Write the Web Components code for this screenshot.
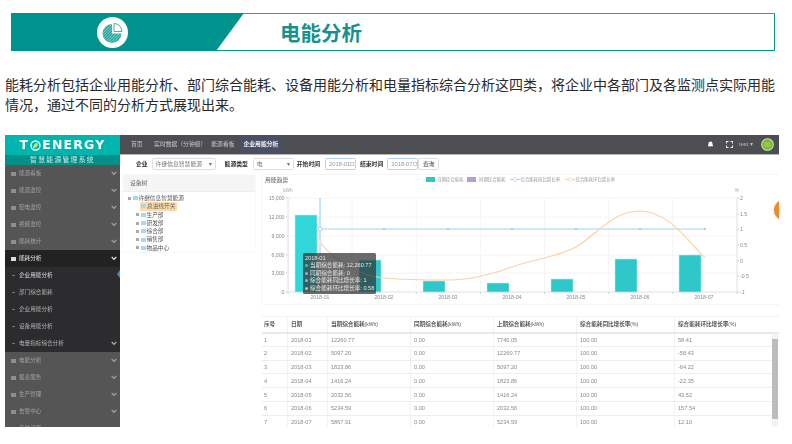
<!DOCTYPE html>
<html lang="zh"><head><meta charset="utf-8"><title>电能分析</title>
<style>
html,body{margin:0;background:#fff;width:792px;height:444px;overflow:hidden;font-family:"Liberation Sans","Noto Sans CJK SC",sans-serif}
</style></head><body>
<page-banner>电能分析</page-banner>
<intro-text>能耗分析包括企业用能分析、部门综合能耗、设备用能分析和电量指标综合分析这四类，将企业中各部门及各监测点实际用能情况，通过不同的分析方式展现出来。</intro-text>
<energy-app></energy-app>
<script>
const FONT='"Liberation Sans","Noto Sans CJK SC",sans-serif';
class Base extends HTMLElement{
  constructor(){super();this.attachShadow({mode:'open'}).innerHTML=this.constructor.html;}
}
customElements.define('page-banner',class extends Base{static html=`<style>
:host{display:flex;box-sizing:border-box;height:38px;margin:13px 17px 0 11px;border:1px solid #0b9490;border-left:0;border-top-color:#2b9f9b;background:#fff;font-family:"Noto Sans CJK SC",sans-serif}
.l{flex:0 0 233px;margin:-1px 0;background:#00938e;clip-path:polygon(0 0,100% 0,88% 100%,0 100%);display:flex;align-items:center;padding-left:86px;box-sizing:border-box}
.t{margin-left:36px;font-size:20.5px;line-height:36px;font-weight:700;color:#17918b;white-space:nowrap}
svg{display:block}
</style><div class="l"><svg width="31" height="31" viewBox="0 0 31 31"><defs><pattern id="h" width="2" height="2" patternUnits="userSpaceOnUse" patternTransform="rotate(45)"><rect width="2" height="2" fill="#7fc9c5"/><rect width="1" height="2" fill="#159c97"/></pattern></defs><circle cx="15.5" cy="15.5" r="15.5" fill="#fff"/><path d="M15 7A9.5 9.5 0 1 0 24.5 16.5H15Z" fill="url(#h)"/><path d="M17 6.500A8 8 0 0 1 25 14.500H17Z" fill="#fff" stroke="#159c97" stroke-width=".8"/></svg></div><div class="t"><slot></slot></div>`});
customElements.define('intro-text',class extends Base{static html=`<style>
:host{display:block;width:771px;margin:23px 0 0 5px;font:14px/20px "Noto Sans CJK SC",sans-serif;color:#2a2a2a}
</style><slot></slot>`});

customElements.define('side-menu',class extends Base{
static html=`<style>
:host{display:block;width:115px;background:#555;color:#a2a2a2;font:5.6px/17px ${FONT};overflow:hidden}
.logo{height:20px;background:#00b5ad;color:#fff;display:flex;align-items:center;justify-content:center;font:700 12.5px/20px "DejaVu Sans",sans-serif;letter-spacing:1.2px}
.logo svg{margin:0 1px}
.sub{height:10px;background:#029088;color:#cfe9e4;text-align:center;font-size:6.8px;line-height:10px;letter-spacing:1.3px}
.r{height:17px;display:flex;align-items:center;padding-left:6px;box-sizing:border-box;position:relative}
.r i{width:5px;height:4px;background:#8f8f8f;margin-right:3px;flex:none}
.r b{font-weight:400;white-space:nowrap}
.c{position:absolute;right:3px;top:6px}
.on{background:#222;color:#e8e8e8}.on i{background:#ddd}
.s{background:#2c2c2e;color:#b0b0b0;padding-left:7px}
.s u{width:3px;height:1px;background:#777;margin-right:4px;flex:none}
.mark{position:absolute;right:0;top:3px;border:4px solid transparent;border-right:3px solid #3b8fd6;border-left:0}
</style><div class="logo"><span>T</span><svg width="11" height="11" viewBox="0 0 11 11"><circle cx="5.500" cy="5.500" r="4.500" fill="none" stroke="#fff" stroke-width="1.300"/><path d="M3 8C3 5 5 3 8 3 8 6 6 8 3 8Z" fill="#cfe46a"/></svg><span>ENERGY</span></div><div class="sub">智慧能源管理系统</div><div id="m"></div>`;
connectedCallback(){
 const chev='<svg class="c" width="6" height="5" viewBox="0 0 6 5"><path d="M.7 1 3 3.400 5.300 1" fill="none" stroke="currentColor" stroke-width="1.200"/></svg>';
 const item=(t,cl='')=>`<div class="r ${cl}"><i></i><b>${t}</b>${chev}</div>`;
 this.shadowRoot.getElementById('m').innerHTML=
 ['能源看板','能源监控','配电监控','视频监控','能耗统计'].map(t=>item(t)).join('')+item('能耗分析','on')+
 `<div class="r s" style="color:#ddd"><u></u><b>企业用能分析</b><span class="mark"></span></div>`+
 ['部门综合能耗','企业用能分析','设备用能分析'].map(t=>`<div class="r s"><u></u><b>${t}</b></div>`).join('')+
 `<div class="r s"><u></u><b>电量指标综合分析</b>${chev}</div>`+
 ['电能分析','报表服务','生产管理','告警中心','系统设置'].map(t=>item(t)).join('');
}});

customElements.define('top-bar',class extends Base{static html=`<style>
:host{display:flex;align-items:stretch;height:20px;background:#4d4e52;border-bottom:1px solid #b5b5b8;box-sizing:border-box;color:#c8c8c8;font:5.8px/19px ${FONT};white-space:nowrap}
a{display:block;padding:0 2.500px}
a:first-of-type{margin-left:8.500px;padding-right:9px}
.on{background:#4b4f66;color:#f1f1f1;margin-left:3.500px;padding:0 3px;font-weight:700}
.sp{flex:1}
.ic{display:flex;align-items:center;gap:0;padding-right:5px}
.ic svg{display:block}
.u{margin:0 8px 0 6px;color:#bbb}
</style><a>首页</a><a>实时数据（分钟级）</a><a>能源看板</a><a class="on">企业用能分析</a><span class="sp"></span><span class="ic">
<svg width="7" height="7" viewBox="0 0 7 7" style="margin-right:12px"><path d="M3.500.4C2 .4 1.500 1.500 1.500 3 1.500 4.300.7 4.800.7 5.300H6.300C6.300 4.800 5.500 4.300 5.500 3 5.500 1.500 5 .4 3.500.4ZM2.800 5.800A.8.8 0 0 0 4.200 5.800Z" fill="#fff"/></svg>
<svg width="7" height="7" viewBox="0 0 7 7"><path d="M0 0H2.500V1H1V2.500H0ZM7 0V2.500H6V1H4.500V0ZM0 7V4.500H1V6H2.500V7ZM7 7H4.500V6H6V4.500H7Z" fill="#eee"/></svg>
<span class="u">test ▾</span>
<svg width="13" height="13" viewBox="0 0 13 13"><circle cx="6.500" cy="6.500" r="6.300" fill="#dff0c4"/><circle cx="6.500" cy="6.500" r="5.400" fill="#7eb83a"/><rect x="3.500" y="4" width="6" height="5" rx="1" fill="#94c94e"/></svg></span>`});

customElements.define('filter-bar',class extends Base{static html=`<style>
:host{display:flex;align-items:center;height:19px;padding:0 0 1px 16px;box-sizing:border-box;font:5.8px/12px ${FONT};color:#555;white-space:nowrap}
b{color:#333;display:block}
.b{box-sizing:border-box;height:12px;border:1px solid #ddd;border-radius:1.500px;padding:0 3px;display:flex;justify-content:space-between;color:#777;line-height:10px}
.d{border-color:#b6d0f1;color:#999;padding:0 1px 0 3px}
.d svg{margin-top:2.500px;flex:none}
</style><b>企业</b>
<span class="b" style="width:64px;margin-left:4px"><span>许继信息智慧能源</span><span>▾</span></span>
<b style="margin-left:9px">能源类型</b>
<span class="b" style="width:41px;margin-left:5px"><span>电</span><span>▾</span></span>
<b style="margin-left:3px">开始时间</b>
<span class="b d" style="width:31px;margin-left:5px"><span>2018-01</span><svg width="4" height="4"><rect x=".5" y=".5" width="3" height="3" fill="none" stroke="#a8bcdc" stroke-width=".7"/></svg></span>
<b style="margin-left:4px">结束时间</b>
<span class="b d" style="width:31px;margin-left:4px"><span>2018-07</span><svg width="4" height="4"><rect x=".5" y=".5" width="3" height="3" fill="none" stroke="#a8bcdc" stroke-width=".7"/></svg></span>
<span class="b" style="width:21px;justify-content:center;color:#444">查询</span>`});

customElements.define('tree-panel',class extends Base{
static html=`<style>
:host{display:block;width:132px;font:5.7px/8.300px ${FONT};color:#555;box-shadow:0 0 1px #ddd}
h4{margin:0;height:17px;background:#f5f5f5;font:5.8px/17px ${FONT};color:#666;padding-left:7px;border-bottom:1px solid #eee;box-sizing:border-box}
ul{list-style:none;margin:2px 0 0;padding:0}
li{display:flex;align-items:center;height:8.300px;white-space:nowrap}
.x{width:3px;height:3px;background:#aaa;margin-right:1.500px;flex:none}
.f{width:5px;height:4px;background:#a9d7f2;border-radius:.5px;margin-right:1px;flex:none}
.sel{background:#fbdca8;padding:0 2px 0 1px;display:flex;align-items:center;height:8.300px;color:#666}
</style><h4>设备树</h4><ul id="t"></ul>`;
connectedCallback(){
 const row=(t,pad)=>`<li style="padding-left:${pad}px"><span class="x"></span><span class="f"></span>${t}</li>`;
 this.shadowRoot.getElementById('t').innerHTML=row('许继信息智慧能源',5)+
 `<li style="padding-left:17px"><span class="sel"><span class="f"></span>总进线开关</span></li>`+
 ['生产部','研发部','综合部','销售部','物品中心'].map(t=>row(t,13)).join('');
}});

customElements.define('trend-chart',class extends Base{
static html=`<style>
:host{display:block;position:relative;height:129px;box-shadow:0 0 1.500px #d8d8d8}
svg{display:block;font-family:${FONT}}
.tip{position:absolute;left:41px;top:78px;width:73px;height:41px;box-sizing:border-box;background:rgba(50,50,50,.72);color:#e6e6e6;border-radius:1.500px;padding:1.500px 2px;font:5.600px/7.500px ${FONT};white-space:nowrap}
.tip div{height:7.500px;display:flex;align-items:center}
.tip i{width:3px;height:3px;border-radius:50%;margin-right:2px;flex:none}
</style><svg id="s" width="517" height="129" viewBox="262 174 517 129"></svg>
<div class="tip"><div>2018-01</div><div><i style="background:#2ec9cb"></i>当期综合能耗: 12,260.77</div><div><i style="background:#b39ddb"></i>同期综合能耗: 0</div><div><i style="background:#7ab8ee"></i>综合能耗同比增长率: 1</div><div><i style="background:#fbb26e"></i>综合能耗环比增长率: 0.58</div></div>`;
connectedCallback(){
 let o='';
 const T=(x,y,t,a='start',c='#8a8a8a',s=5.2)=>`<text x="${x}" y="${y}" text-anchor="${a}" fill="${c}" font-size="${s}">${t}</text>`;
 const ys=[197,216,235,254,272,291],L=['15,000','12,000','9,000','6,000','3,000','0'];
 const R=['2','1.5','1','0.5','0','-0.5','-1'],yr=[197,213,228,244,260,275,291];
 ys.forEach((y,i)=>{o+=`<path d="M288 ${y}H737" stroke="${i==5?'#d8d8d8':'#f1f1f1'}" stroke-width=".8"/><path d="M285.500 ${y}H288" stroke="#bbb" stroke-width=".6"/>`+T(284.500,y+1.800,L[i],'end')});
 for(let k=0;k<=7;k++){const x=288+k*64.14;o+=`<path d="M${x} 197V291" stroke="#f3f3f3" stroke-width=".8"/><path d="M${x} 291V293" stroke="#bbb" stroke-width=".6"/>`;}
 o+=`<path d="M288 197V291M737 197V291" stroke="#e0e0e0" stroke-width=".8"/>`;
 yr.forEach((y,i)=>{o+=`<path d="M737 ${y}H739" stroke="#bbb" stroke-width=".6"/>`+T(740,y+1.800,R[i])});
 o+=T(288,190.500,'kWh','middle','#aaa',4.800)+T(737,190.500,'%','middle','#aaa',4.800);
 const tops=[214,259,280,282,278,258,254];
 tops.forEach((t,i)=>{const x=295+i*64;o+=`<rect x="${x}" y="${t}" width="22" height="${291-t}" fill="${i?'#2ec8cb':'#31d6da'}" stroke="#b4eeee" stroke-width=".6"/>`+T(x+25,298,'2018-0'+(i+1),'middle')});
 o+=`<path d="M320 197V291" stroke="#8cc8f6" stroke-width="1"/>`;
 o+=`<path d="M320 228H705" stroke="#a5d3f6" stroke-width="1.200"/>`;
 [384,448,512,576,640,705].forEach(x=>o+=`<circle cx="${x}" cy="228" r="1" fill="#8cc8f6"/>`);
 o+=`<circle cx="320" cy="228" r="2" fill="#fff" stroke="#8cc8f6" stroke-width=".8"/>`;
 o+=`<path d="M320 241C332 258 360 275 384 277S425 279 448 279S490 274 512 266S558 256 576 246S612 210 640 210S688 240 705 257" fill="none" stroke="#fbcfa3" stroke-width="1.100"/><circle cx="320" cy="241" r="1.500" fill="#fff" stroke="#fbcfa3" stroke-width=".7"/>`;
 o+=T(265,180.500,'用能趋势','start','#666',5.800);
 o+=`<rect x="426" y="176" width="9" height="5" fill="#2ec8cb"/>`+T(437,180.300,'当期综合能耗','start','#999',4.400);
 o+=`<rect x="467" y="176" width="9" height="5" fill="#b39ddb"/>`+T(479,180.300,'同期综合能耗','start','#999',4.400);
 o+=`<path d="M510 178.500H520" stroke="#a5d3f6"/><circle cx="515" cy="178.500" r="1.800" fill="#fff" stroke="#a5d3f6" stroke-width=".7"/>`+T(520.500,180.300,'综合能耗同比增长率','start','#999',4.400);
 o+=`<path d="M565 178.500H575" stroke="#fbcfa3"/><circle cx="570" cy="178.500" r="1.800" fill="#fff" stroke="#fbcfa3" stroke-width=".7"/>`+T(575.500,180.300,'综合能耗环比增长率','start','#999',4.400);
 this.shadowRoot.getElementById('s').innerHTML=o;
}});

customElements.define('data-table',class extends Base{
static html=`<style>
:host{display:block;position:relative;height:112px;overflow:hidden;font:5.6px/10px ${FONT};color:#8a8a8a}
table{border-collapse:collapse;table-layout:fixed;width:517px}
th,td{padding:0 0 0 3.500px;text-align:left;border:1px solid #eee;border-left-color:#f3f3f3;border-right-color:#f3f3f3;white-space:nowrap;overflow:hidden}
tr{height:13.800px}
thead tr{height:16px}
th{color:#555;border-top:1px solid #f2f2f2;border-bottom:2px solid #e9e9e9;font-weight:700}
th small{font-size:5px;font-weight:400}
td:first-child,th:first-child{padding-left:2px;border-left:0}
th:last-child,td:last-child{border-right:0}
.sb{position:absolute;right:1px;top:17px;bottom:0;width:6px;background:#f3f3f3}
.sb::after{content:"";position:absolute;left:0;right:0;top:6px;bottom:9px;background:#bcbcbc}
</style><table><colgroup><col style="width:25px"><col style="width:40px"><col style="width:83px"><col style="width:83px"><col style="width:83px"><col style="width:98px"><col style="width:105px"></colgroup><thead id="h"></thead><tbody id="b"></tbody></table><div class="sb"></div>`;
connectedCallback(){
 const c=['12260.77','5097.20','1823.86','1416.24','2032.56','5234.59','5867.91'],
 p=['7740.05','12260.77','5097.20','1823.86','1416.24','2032.56','5234.59'],
 r=['58.41','-58.43','-64.22','-22.35','43.52','157.54','12.10'];
 const k='<small>(kWh)</small>',q='<small>(%)</small>';
 this.shadowRoot.getElementById('h').innerHTML='<tr>'+['序号','日期','当期综合能耗'+k,'同期综合能耗'+k,'上期综合能耗'+k,'综合能耗同比增长率'+q,'综合能耗环比增长率'+q].map(t=>`<th>${t}</th>`).join('')+'</tr>';
 this.shadowRoot.getElementById('b').innerHTML=c.map((v,i)=>`<tr>${[i+1,'2018-0'+(i+1),v,'0.00',p[i],'100.00',r[i]].map(t=>`<td>${t}</td>`).join('')}</tr>`).join('');
}});

customElements.define('energy-app',class extends Base{static html=`<style>
:host{display:grid;grid-template-columns:115px 659px;width:774px;height:292px;margin:21px 0 0 5px;overflow:hidden;position:relative;background:#fff;filter:blur(.5px)}
.main{min-width:0;display:flex;flex-direction:column}
.panels{display:flex;gap:7px;padding:1px 0 0 3px;flex:1}
.right{width:517px;display:flex;flex-direction:column;gap:12px}
tree-panel{align-self:flex-start}
.ball{position:absolute;left:769px;top:65px;width:20px;height:20px;border-radius:50%;background:#f58a1f;box-shadow:0 0 2px rgba(0,0,0,.35)}
</style><side-menu></side-menu><div class="main"><top-bar></top-bar><filter-bar></filter-bar><div class="panels"><tree-panel></tree-panel><div class="right"><trend-chart></trend-chart><data-table></data-table></div></div></div><div class="ball"></div>`});
</script>
</body></html>
